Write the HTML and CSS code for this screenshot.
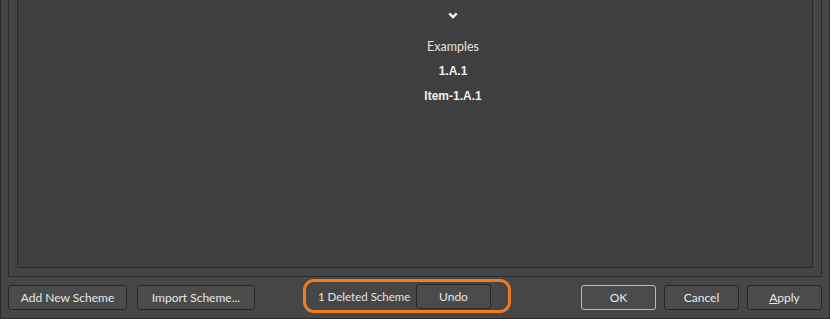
FILE: index.html
```html
<!DOCTYPE html>
<html>
<head>
<meta charset="utf-8">
<link rel="stylesheet" href="styles.css">
</head>
<body>
<div class="window">
  <div class="frame">
    <div class="inner">
      <div class="preview">
        <svg class="chevron" width="10" height="7" viewBox="0 0 10 7"><polyline points="1.3,1.3 5,5 8.7,1.3" fill="none" stroke="#f4f4f4" stroke-width="2.4"/></svg>
        <div class="label">Examples</div>
        <div class="example">1.A.1</div>
        <div class="example">Item-1.A.1</div>
      </div>
    </div>
  </div>
  <div class="footer">
    <button class="btn btn-wide">Add New Scheme</button>
    <button class="btn btn-wide btn-import">Import Scheme...</button>
    <div class="deleted">
      <span class="deleted-text">1 Deleted Scheme</span>
      <button class="btn btn-undo">Undo</button>
    </div>
    <div class="actions">
      <button class="btn btn-std btn-ok">OK</button>
      <button class="btn btn-std">Cancel</button>
      <button class="btn btn-std"><u>A</u>pply</button>
    </div>
  </div>
</div>
</body>
</html>
```
FILE: styles.css
```css
html, body {
  margin: 0;
  padding: 0;
  background: #454545;
}
body {
  font-family: "Segoe UI", Lato, "Noto Sans", sans-serif;
  font-size: 12px;
  color: #e6e6e6;
}
.window {
  box-sizing: border-box;
  width: 830px;
  height: 319px;
  border: 1px solid #2a2a2a;
  border-top: none;
  background: #464646;
  display: flex;
  flex-direction: column;
}
.frame {
  margin: 0 7px;
  border: 1px solid #2c2c2c;
  border-top: none;
  padding: 0 8px 8px 8px;
  background: #454545;
}
.inner {
  box-sizing: border-box;
  height: 268px;
  border: 1px solid #2a2a2a;
  border-top: none;
  background: #3f3f3f;
}
.preview {
  display: flex;
  flex-direction: column;
  align-items: center;
  padding-top: 12px;
  padding-left: 76px;
}
.chevron {
  display: block;
  margin-bottom: 15px;
}
.label, .example {
  line-height: 25px;
  color: #e4e4e4;
}
.label {
  font-size: 12.5px;
}
.example {
  font-family: "Liberation Sans", Arial, sans-serif;
  font-size: 12px;
  font-weight: bold;
  color: #eeeeee;
}
.footer {
  flex: 1;
  display: flex;
  align-items: center;
  padding: 0 7px;
}
.btn {
  box-sizing: border-box;
  flex: none;
  height: 25px;
  background: #4b4b4b;
  border: 1px solid #262626;
  border-radius: 3px;
  color: #e8e8e8;
  font-family: inherit;
  font-size: 12px;
  padding: 0;
}
.btn-wide {
  width: 119px;
}
.btn-import {
  width: 118px;
  margin-left: 10px;
}
.deleted {
  box-sizing: border-box;
  margin-left: 48px;
  width: 208px;
  height: 34px;
  border: 3px solid #f47a1e;
  border-radius: 11px;
  display: flex;
  align-items: center;
  padding-left: 12px;
  margin-top: -3px;
}
.deleted-text {
  color: #e4e4e4;
  white-space: nowrap;
  font-size: 11.5px;
}
.btn-undo {
  width: 75px;
  margin-left: auto;
  margin-right: 17px;
}
.actions {
  margin-left: auto;
  display: flex;
  gap: 8px;
}
.btn-std {
  width: 75px;
}
.btn-ok {
  border-color: #9fc3de;
}
```
